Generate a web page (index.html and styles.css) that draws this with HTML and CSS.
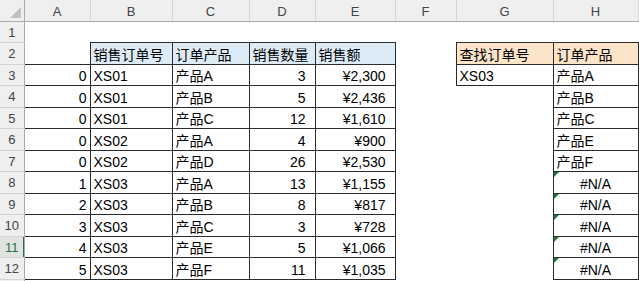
FILE: index.html
```html
<!DOCTYPE html>
<html lang="zh-CN">
<head>
<meta charset="utf-8">
<title>Sheet</title>
<link rel="stylesheet" href="styles.css">
</head>
<body>
<table class="sheet">
  <colgroup>
    <col class="w-rh"><col class="w-a"><col class="w-b"><col class="w-c"><col class="w-d"><col class="w-e"><col class="w-f"><col class="w-g"><col class="w-h"><col class="w-i">
  </colgroup>
  <tr class="colhdr">
    <th class="corner"><svg class="corner-tri" width="24" height="20" viewBox="0 0 24 20"><polygon points="21,7 21,18 10,18" fill="#c2c2c2"/></svg></th>
    <th>A</th><th>B</th><th>C</th><th>D</th><th>E</th><th>F</th><th>G</th><th>H</th><th></th>
  </tr>
  <tr class="r21">
    <td class="rh">1</td><td></td><td></td><td></td><td></td><td></td><td></td><td></td><td></td><td></td>
  </tr>
  <tr class="r22">
    <td class="rh">2</td><td></td>
    <td class="b blue">销售订单号</td><td class="b blue">订单产品</td><td class="b blue">销售数量</td><td class="b blue">销售额</td>
    <td></td>
    <td class="b peach">查找订单号</td><td class="b peach">订单产品</td><td></td>
  </tr>
  <tr class="r21">
    <td class="rh">3</td><td class="b num">0</td><td class="b">XS01</td><td class="b">产品A</td><td class="b num pad">3</td><td class="b num pad">¥2,300</td>
    <td></td><td class="b">XS03</td><td class="b">产品A</td><td></td>
  </tr>
  <tr class="r22">
    <td class="rh">4</td><td class="b num">0</td><td class="b">XS01</td><td class="b">产品B</td><td class="b num pad">5</td><td class="b num pad">¥2,436</td>
    <td></td><td></td><td class="b">产品B</td><td></td>
  </tr>
  <tr class="r21">
    <td class="rh">5</td><td class="b num">0</td><td class="b">XS01</td><td class="b">产品C</td><td class="b num pad">12</td><td class="b num pad">¥1,610</td>
    <td></td><td></td><td class="b">产品C</td><td></td>
  </tr>
  <tr class="r22">
    <td class="rh">6</td><td class="b num">0</td><td class="b">XS02</td><td class="b">产品A</td><td class="b num pad">4</td><td class="b num pad">¥900</td>
    <td></td><td></td><td class="b">产品E</td><td></td>
  </tr>
  <tr class="r21">
    <td class="rh">7</td><td class="b num">0</td><td class="b">XS02</td><td class="b">产品D</td><td class="b num pad">26</td><td class="b num pad">¥2,530</td>
    <td></td><td></td><td class="b">产品F</td><td></td>
  </tr>
  <tr class="r22">
    <td class="rh">8</td><td class="b num">1</td><td class="b">XS03</td><td class="b">产品A</td><td class="b num pad">13</td><td class="b num pad">¥1,155</td>
    <td></td><td></td><td class="b err">#N/A</td><td></td>
  </tr>
  <tr class="r21">
    <td class="rh">9</td><td class="b num">2</td><td class="b">XS03</td><td class="b">产品B</td><td class="b num pad">8</td><td class="b num pad">¥817</td>
    <td></td><td></td><td class="b err">#N/A</td><td></td>
  </tr>
  <tr class="r22">
    <td class="rh">10</td><td class="b num">3</td><td class="b">XS03</td><td class="b">产品C</td><td class="b num pad">3</td><td class="b num pad">¥728</td>
    <td></td><td></td><td class="b err">#N/A</td><td></td>
  </tr>
  <tr class="r21">
    <td class="rh active">11</td><td class="b num">4</td><td class="b">XS03</td><td class="b">产品E</td><td class="b num pad">5</td><td class="b num pad">¥1,066</td>
    <td></td><td></td><td class="b err">#N/A</td><td></td>
  </tr>
  <tr class="r22">
    <td class="rh">12</td><td class="b num">5</td><td class="b">XS03</td><td class="b">产品F</td><td class="b num pad">11</td><td class="b num pad">¥1,035</td>
    <td></td><td></td><td class="b err">#N/A</td><td></td>
  </tr>
  <tr class="r21">
    <td class="rh"></td><td></td><td></td><td></td><td></td><td></td><td></td><td></td><td></td><td></td>
  </tr>
</table>
</body>
</html>
```

FILE: styles.css
```css
html, body {
  margin: 0;
  padding: 0;
  background: #ffffff;
  overflow: hidden;
  width: 639px;
  height: 281px;
}

.sheet {
  border-collapse: collapse;
  table-layout: fixed;
  width: 660px;
  font-family: "Liberation Sans", "Noto Sans CJK SC", sans-serif;
  font-size: 14px;
  line-height: 17px;
  color: #000;
}

.w-rh { width: 24px; }
.w-a { width: 66px; }
.w-b { width: 82px; }
.w-c { width: 77px; }
.w-d { width: 66px; }
.w-e { width: 80px; }
.w-f { width: 61px; }
.w-g { width: 97px; }
.w-h { width: 85px; }
.w-i { width: 22px; }

.colhdr { height: 21px; }
.r21 { height: 21px; }
.r22 { height: 22px; }

.colhdr th {
  background: #efefef;
  color: #444;
  font-family: "Liberation Sans", sans-serif;
  font-weight: normal;
  font-size: 13px;
  padding: 2px 0 0;
  vertical-align: middle;
  text-align: center;
  white-space: nowrap;
  overflow: hidden;
  border-right: 1px solid #d4d4d4;
  border-bottom: 1px solid #ababab;
}

.colhdr th.corner {
  padding: 0;
  border-right: 1px solid #ababab;
}

.corner-tri {
  display: block;
}

.sheet td {
  padding: 0 3px;
  vertical-align: bottom;
  white-space: nowrap;
  overflow: hidden;
}

.sheet td.rh {
  background: #efefef;
  color: #444;
  font-size: 13px;
  text-align: center;
  vertical-align: middle;
  padding: 1px 0 0;
  border-right: 1px solid #ababab;
  border-bottom: 1px solid #d4d4d4;
}

.sheet td.rh.active {
  position: relative;
  color: #217346;
  background: #e2e2e2;
}

.sheet td.rh.active::after {
  content: "";
  position: absolute;
  top: 0;
  right: -1px;
  bottom: 0;
  width: 2px;
  background: #217346;
}

.b {
  border: 1px solid #2b2b2b;
}

.blue { background: #ddebf7; }
.peach { background: #fce4c8; }

.num { text-align: right; }
.sheet td.pad { padding-right: 9px; }

.sheet td.err {
  position: relative;
  text-align: center;
}

.sheet td.err::before {
  content: "";
  position: absolute;
  top: 0;
  left: 0;
  width: 0;
  height: 0;
  border-top: 5px solid #1e7a3c;
  border-right: 5px solid transparent;
}
```
